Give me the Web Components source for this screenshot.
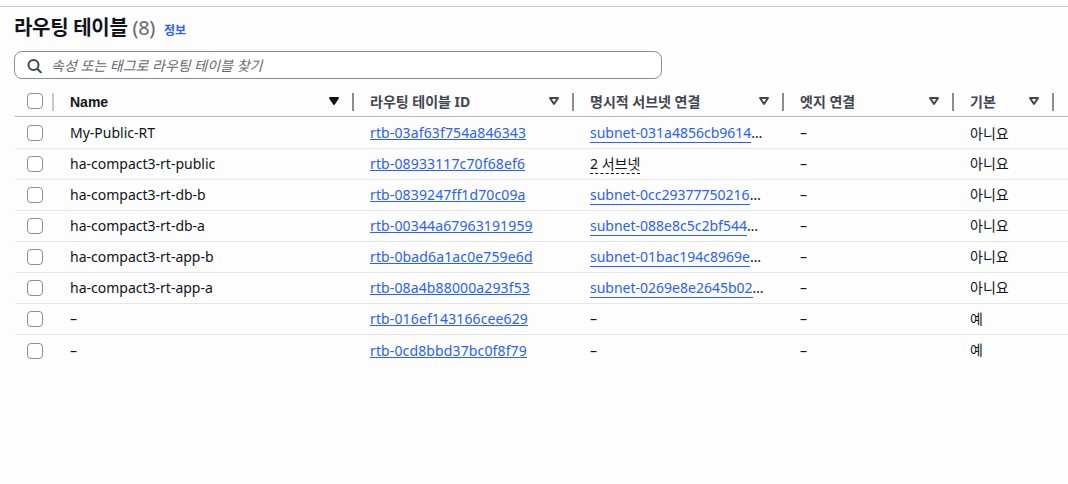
<!DOCTYPE html>
<html lang="ko">
<head>
<meta charset="utf-8">
<title>라우팅 테이블</title>
<style>
  html, body { margin: 0; height: 100%; background: #fdfdfd; }
  body { font-family: "Noto Sans", "Noto Sans CJK KR", sans-serif; font-size: 14px; color: #0f141a; overflow: hidden; }
</style>
</head>
<body>
<route-table-panel></route-table-panel>

<script>
const ROWS = [
  { name: 'My-Public-RT', id: 'rtb-03af63f754a846343', subnet: 'subnet-031a4856cb9614', main: '아니요' },
  { name: 'ha-compact3-rt-public', id: 'rtb-08933117c70f68ef6', count: '2 서브넷', main: '아니요' },
  { name: 'ha-compact3-rt-db-b', id: 'rtb-0839247ff1d70c09a', subnet: 'subnet-0cc29377750216', main: '아니요' },
  { name: 'ha-compact3-rt-db-a', id: 'rtb-00344a67963191959', subnet: 'subnet-088e8c5c2bf544', main: '아니요' },
  { name: 'ha-compact3-rt-app-b', id: 'rtb-0bad6a1ac0e759e6d', subnet: 'subnet-01bac194c8969e', main: '아니요' },
  { name: 'ha-compact3-rt-app-a', id: 'rtb-08a4b88000a293f53', subnet: 'subnet-0269e8e2645b02', main: '아니요' },
  { name: '–', id: 'rtb-016ef143166cee629', main: '예' },
  { name: '–', id: 'rtb-0cd8bbd37bc0f8f79', main: '예' },
];

class TableCheckbox extends HTMLElement {
  connectedCallback() {
    this.attachShadow({ mode: 'open' });
    this.shadowRoot.innerHTML = `
      <style>
        :host { display: block; width: 16px; height: 16px; box-sizing: border-box; background: #fff;
                border: 1px solid #8c8c94; border-radius: 4px; }
      </style>`;
  }
}

class SearchBox extends HTMLElement {
  connectedCallback() {
    this.attachShadow({ mode: 'open' });
    this.shadowRoot.innerHTML = `
      <style>
        :host { display: flex; align-items: center; box-sizing: border-box; width: 648px; height: 28px;
                margin-left: 14px; padding-left: 12px; gap: 8px; background: #fff;
                border: 1px solid #8c8c94; border-radius: 8px; }
        svg { flex: none; display: block; }
        span { font-style: italic; font-size: 14px; color: #656871; }
      </style>
      <svg width="16" height="16" viewBox="0 0 16 16" fill="none" stroke="#424650" stroke-width="2">
        <circle cx="6.5" cy="8" r="5"/><path d="M10 11.5l4.5 4.5"/>
      </svg>
      <span><slot></slot></span>`;
  }
}

class PanelHeader extends HTMLElement {
  connectedCallback() {
    this.attachShadow({ mode: 'open' });
    this.shadowRoot.innerHTML = `
      <style>
        :host { display: flex; align-items: baseline; height: 44px; box-sizing: border-box; padding: 5px 0 0 14px; }
        h2 { margin: 0; font-size: 20px; line-height: 32px; font-weight: 700; letter-spacing: -.3px; color: #0f141a; }
        .count { margin-left: 5px; font-size: 20px; letter-spacing: -.3px; color: #656871; }
        a { margin-left: 9px; font-size: 12px; font-weight: 700; color: #295eff; text-decoration: none; }
      </style>
      <h2><slot></slot></h2>
      <span class="count">(8)</span>
      <a href="#">정보</a>`;
  }
}

class ColumnHead extends HTMLElement {
  connectedCallback() {
    const sorted = this.hasAttribute('sorted');
    this.attachShadow({ mode: 'open' });
    this.shadowRoot.innerHTML = `
      <style>
        :host { display: flex; align-items: center; justify-content: space-between; box-sizing: border-box;
                height: 30px; padding: 0 13px 0 17px; position: relative;
                font-weight: 700; font-size: 14px; color: ${sorted ? '#0f141a' : '#424650'}; }
        :host([sorted]) span { font-family: "Liberation Sans", sans-serif; padding-top: 2px; }
        :host::after { content: ''; position: absolute; right: -1px; top: 7px; height: 18px; width: 2px; background: #8c8c94; }
        svg { flex: none; display: block; }
      </style>
      <span><slot></slot></span>
      <svg width="12" height="10" viewBox="0 0 12 10">
        ${sorted
          ? '<path d="M2 2h8L6 8z" fill="#0f141a" stroke="#0f141a" stroke-width="2" stroke-linejoin="round"/>'
          : '<path d="M2 2h8L6 8z" fill="none" stroke="#424650" stroke-width="2" stroke-linejoin="round"/>'}
      </svg>`;
  }
}

class RouteRow extends HTMLElement {
  set data(row) {
    let subnet = '<div class="cell">–</div>';
    if (row.subnet) subnet = `<div class="cell"><span class="clip"><a href="#">${row.subnet}</a>…</span></div>`;
    if (row.count) subnet = `<div class="cell ko"><span class="dash">${row.count}</span></div>`;
    this.attachShadow({ mode: 'open' });
    this.shadowRoot.innerHTML = `
      <style>
        :host { display: grid; grid-template-columns: 38px 300px 220px 210px 170px 100px; height: 31px; box-sizing: border-box;
                border-bottom: 1px solid #e6e6ea; align-items: center; font-size: 14px; color: #0f141a; }
        :host(:first-child) { height: 32px; }
        :host(:last-child) { border-bottom: 0; }
        .check { padding-left: 12px; }
        .cell { padding-left: 17px; padding-bottom: 1px; white-space: nowrap; }
        .cell.ko { padding-bottom: 3px; }
        :host(:first-child) .cell { padding-bottom: 0; }
        a { color: #295eff; text-decoration: underline; text-underline-offset: 1px; }
        .id a { letter-spacing: .13px; }
        .clip { display: block; width: 176px; overflow: hidden; line-height: 19px; padding: 2px 0; }
        .clip a { text-decoration: none; border-bottom: 1px solid #295eff; }
        .dash { border-bottom: 1px dashed #0f141a; }
      </style>
      <div class="check"><table-checkbox></table-checkbox></div>
      <div class="cell">${row.name}</div>
      <div class="cell id"><a href="#">${row.id}</a></div>
      ${subnet}
      <div class="cell">–</div>
      <div class="cell ko">${row.main}</div>`;
  }
}

class RouteTablePanel extends HTMLElement {
  connectedCallback() {
    this.attachShadow({ mode: 'open' });
    this.shadowRoot.innerHTML = `
      <style>
        :host { display: block; margin-top: 6px; border-top: 1px solid #c6c6cd; }
        .table { margin: 7px 0 0 15px; }
        .head { display: grid; grid-template-columns: 38px 300px 220px 210px 170px 100px; height: 31px; box-sizing: border-box;
                border-bottom: 1px solid #b4b4bb; align-items: center; }
        .head .check { display: flex; align-items: center; justify-content: space-between; height: 30px; padding-left: 12px; position: relative; }
        .head .check::after { content: ''; position: absolute; right: -1px; top: 7px; height: 18px; width: 2px; background: #c6c6cd; }
      </style>
      <panel-header>라우팅 테이블</panel-header>
      <search-box>속성 또는 태그로 라우팅 테이블 찾기</search-box>
      <div class="table">
        <div class="head">
          <div class="check"><table-checkbox></table-checkbox></div>
          <column-head sorted>Name</column-head>
          <column-head>라우팅 테이블 ID</column-head>
          <column-head>명시적 서브넷 연결</column-head>
          <column-head>엣지 연결</column-head>
          <column-head>기본</column-head>
        </div>
        <div class="rows"></div>
      </div>`;
    const rows = this.shadowRoot.querySelector('.rows');
    ROWS.forEach(r => {
      const el = document.createElement('route-row');
      rows.appendChild(el);
      el.data = r;
    });
  }
}

customElements.define('table-checkbox', TableCheckbox);
customElements.define('search-box', SearchBox);
customElements.define('panel-header', PanelHeader);
customElements.define('column-head', ColumnHead);
customElements.define('route-row', RouteRow);
customElements.define('route-table-panel', RouteTablePanel);
</script>
</body>
</html>
